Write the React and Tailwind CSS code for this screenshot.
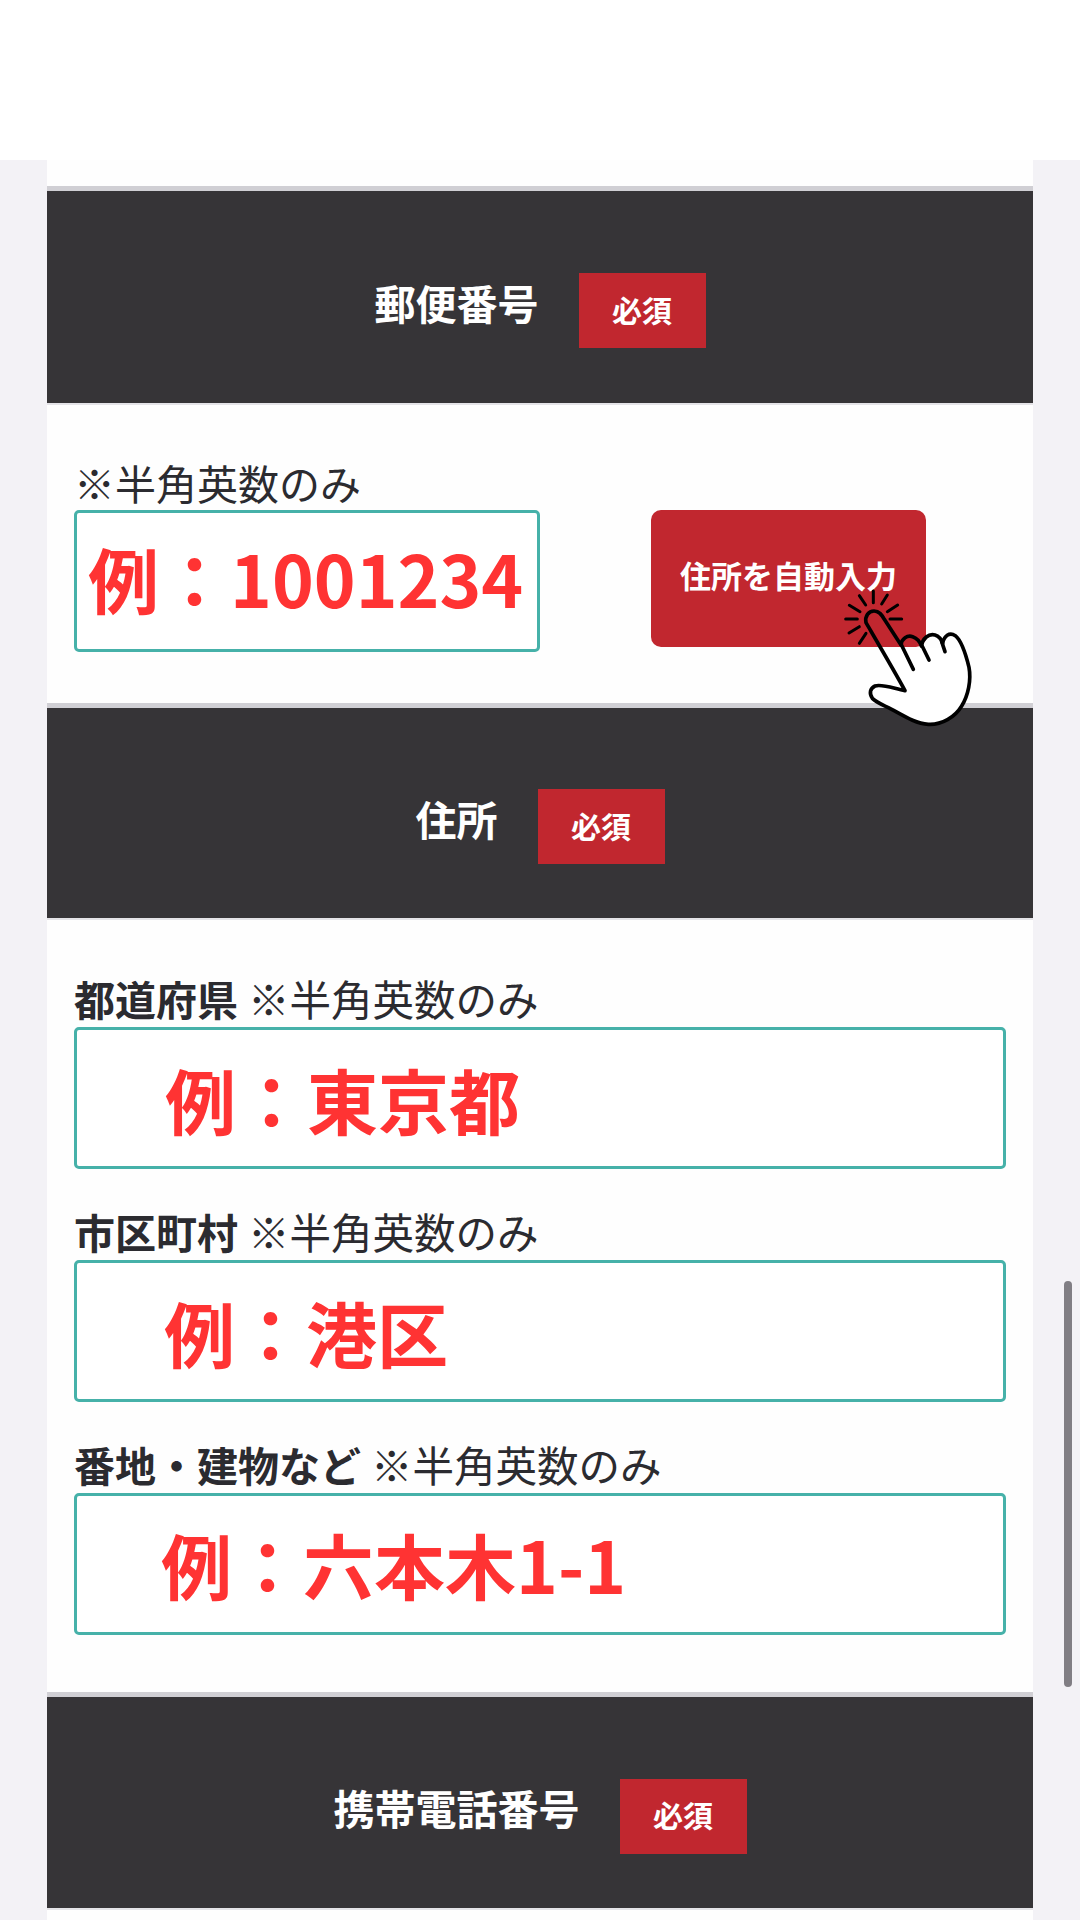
const FONT = "font-['Noto_Sans_CJK_JP','Noto_Sans',sans-serif]";

function Header({ title, height }) {
  return (
    <div className={`${height} pt-[28px] flex items-center justify-center gap-[40px] bg-[#363437] border-t-[5px] border-t-[#d0cfd4] border-b-[2px] border-b-[#e4e3e7] box-content`}>
      <div className="-mt-[19px] text-[41px] leading-[50px] font-bold text-white">{title}</div>
      <div className="w-[127px] h-[75px] -mt-[1px] pb-[4px] bg-[#c1272f] flex items-center justify-center text-[30px] leading-none font-bold text-white">必須</div>
    </div>
  );
}

function Field({ label, inset, value, gap }) {
  return (
    <div className={gap}>
      <div className="h-[40px] leading-[36px] text-[41px] text-[#2b2b30] whitespace-nowrap">
        <span className="font-bold">{label}</span>
        <span className="ml-[10px] text-[41.5px] font-normal">※半角英数のみ</span>
      </div>
      <div className={`mt-[7px] h-[142px] flex items-center border-[3px] border-[#46b1a9] rounded-[5px] bg-white ${inset}`}>
        <span className="text-[71px] leading-[80px] font-bold text-[#ff3333] whitespace-nowrap">{value}</span>
      </div>
    </div>
  );
}

const HAND_OUTLINE =
  "M108 128C104 108 116 93 132 93C148 93 156 106 163 118L213 195C215 175 232 165 248 170C262 175 270 185 274 198C278 175 296 160 315 165C328 169 334 178 338 190C342 168 358 155 376 167C392 180 408 225 417 262C424 300 415 345 395 378C375 412 335 435 295 433C258 431 225 410 185 388C160 375 140 368 127 355C117 340 120 325 135 318C155 311 190 325 225 332C200 285 150 200 108 128Z";

function Hand() {
  return (
    <svg className="absolute left-[830px] top-[580px] w-[150px] h-[150px]" viewBox="0 0 450 450" fill="none" stroke="#000" strokeLinecap="round" strokeLinejoin="round">
      <clipPath id="palm">
        <rect x="0" y="203" width="450" height="247" />
      </clipPath>
      <path d={HAND_OUTLINE} fill="#fff" stroke="none" clipPath="url(#palm)" />
      <path d={HAND_OUTLINE} strokeWidth="11" />
      <path d="M213 192L250 268M275 195L297 240M335 185L345 215" strokeWidth="11" />
      <path d="M130 33V68M88 47L107 75M172 45L155 72M58 76L90 95M203 75L172 95M47 117H82M180 117H215M57 159L88 140M88 190L108 160" strokeWidth="9" />
    </svg>
  );
}

export default function App() {
  return (
    <div className={`relative w-[1080px] h-[1920px] overflow-hidden bg-[#f3f2f6] ${FONT}`}>
      <div className="h-[160px] bg-white" />
      <div className="mx-[47px] w-[986px] h-[1760px] bg-[#fefefe]">
        <div className="h-[26px]" />
        <Header title="郵便番号" height="h-[184px]" />
        <div className="h-[298px] px-[27px] pt-[59px]">
          <div className="h-[40px] leading-[36px] text-[41px] text-[#2b2b30]">※半角英数のみ</div>
          <div className="mt-[6px] flex items-start">
            <div className="w-[466px] h-[142px] flex items-center pl-[11px] pb-[8px] border-[3px] border-[#46b1a9] rounded-[5px] bg-white">
              <span className="text-[71px] leading-[80px] font-bold text-[#ff3333] whitespace-nowrap">例：1001234</span>
            </div>
            <button className="ml-[111px] w-[275px] h-[137px] rounded-[10px] bg-[#c1272f] text-[31px] leading-none font-bold text-white pb-[8px]">住所を自動入力</button>
          </div>
        </div>
        <Header title="住所" height="h-[182px]" />
        <div className="h-[772px] px-[27px] pt-[60px]">
          <Field label="都道府県" inset="pl-[88px]" value="例：東京都" gap="" />
          <Field label="市区町村" inset="pl-[87px]" value="例：港区" gap="mt-[44px]" />
          <Field label="番地・建物など" inset="pl-[84px] pb-[2px]" value="例：六本木1-1" gap="mt-[44px]" />
        </div>
        <Header title="携帯電話番号" height="h-[183px]" />
      </div>
      <Hand />
      <div className="absolute left-[1064px] top-[1281px] w-[8px] h-[406px] rounded-full bg-[#807e84]" />
    </div>
  );
}
